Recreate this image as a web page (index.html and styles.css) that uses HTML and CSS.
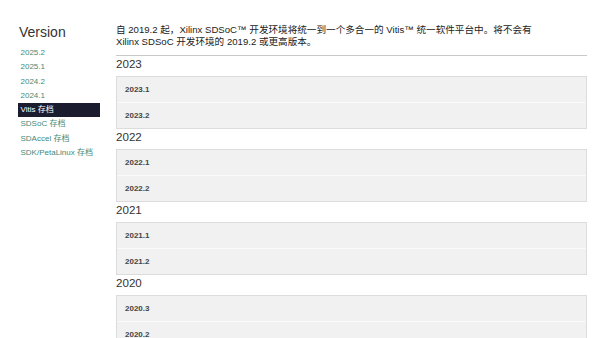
FILE: index.html
```html
<!DOCTYPE html>
<html lang="zh-CN">
<head>
<meta charset="utf-8">
<title>Vitis 存档</title>
<link rel="stylesheet" href="styles.css">
</head>
<body>
<div class="page">
  <aside class="sidebar">
    <h2 class="side-title">Version</h2>
    <ul class="ver-list">
      <li><a href="#">2025.2</a></li>
      <li><a href="#">2025.1</a></li>
      <li><a href="#">2024.2</a></li>
      <li><a href="#">2024.1</a></li>
      <li class="active"><a href="#">Vitis 存档</a></li>
      <li><a href="#">SDSoC 存档</a></li>
      <li><a href="#">SDAccel 存档</a></li>
      <li><a href="#">SDK/PetaLinux 存档</a></li>
    </ul>
  </aside>
  <main class="content">
    <p class="intro">自 2019.2 起，Xilinx SDSoC™ 开发环境将统一到一个多合一的 Vitis™ 统一软件平台中。将不会有<br>Xilinx SDSoC 开发环境的 2019.2 或更高版本。</p>
    <hr class="rule">
    <section class="year">
      <h3 class="year-title">2023</h3>
      <div class="acc">
        <div class="acc-row">2023.1</div>
        <div class="acc-row">2023.2</div>
      </div>
    </section>
    <section class="year">
      <h3 class="year-title">2022</h3>
      <div class="acc">
        <div class="acc-row">2022.1</div>
        <div class="acc-row">2022.2</div>
      </div>
    </section>
    <section class="year">
      <h3 class="year-title">2021</h3>
      <div class="acc">
        <div class="acc-row">2021.1</div>
        <div class="acc-row">2021.2</div>
      </div>
    </section>
    <section class="year">
      <h3 class="year-title">2020</h3>
      <div class="acc">
        <div class="acc-row">2020.3</div>
        <div class="acc-row">2020.2</div>
        <div class="acc-row">2020.1</div>
      </div>
    </section>
  </main>
</div>
</body>
</html>
```

FILE: styles.css
```css
html, body {
  margin: 0;
  padding: 0;
  background: #ffffff;
}

body {
  font-family: "Liberation Sans", "Noto Sans CJK SC", sans-serif;
  color: #333333;
}

.page {
  display: flex;
  gap: 16px;
  padding: 0 13px 0 18px;
}

.sidebar {
  width: 82px;
  flex: none;
}

.side-title {
  margin: 24px 0 6px 1px;
  font-size: 14px;
  line-height: 16px;
  font-weight: normal;
  color: #333333;
}

.ver-list {
  list-style: none;
  margin: 0;
  padding: 0;
}

.ver-list li {
  height: 14.3px;
  line-height: 14.3px;
  font-size: 8px;
  padding-left: 2.5px;
  white-space: nowrap;
}

.ver-list a {
  color: #3f8a7b;
  text-decoration: none;
}

.ver-list li.active {
  background: #1b1d2e;
}

.ver-list li.active a {
  color: #ffffff;
}

.content {
  flex: 1;
  min-width: 0;
}

.intro {
  margin: 24px 0 0 0;
  font-size: 9.6px;
  line-height: 12px;
  color: #222222;
}

.rule {
  margin: 6.5px 0 0 0;
  border: 0;
  border-top: 1px solid #c9c9c9;
  height: 0;
}

.year-title {
  margin: 0 0 6px 0;
  padding-top: 1px;
  font-size: 11.6px;
  line-height: 13px;
  font-weight: normal;
  color: #333333;
}

.acc {
  border: 1px solid #dcdcdc;
  background: #f1f1f1;
}

.acc-row {
  height: 26px;
  line-height: 26px;
  padding-left: 8px;
  font-size: 8px;
  font-weight: bold;
  color: #444444;
  box-sizing: border-box;
}

.acc-row + .acc-row {
  border-top: 1px solid #fafafa;
  height: 26px;
}

.acc-row:first-child {
  height: 25px;
}
```
